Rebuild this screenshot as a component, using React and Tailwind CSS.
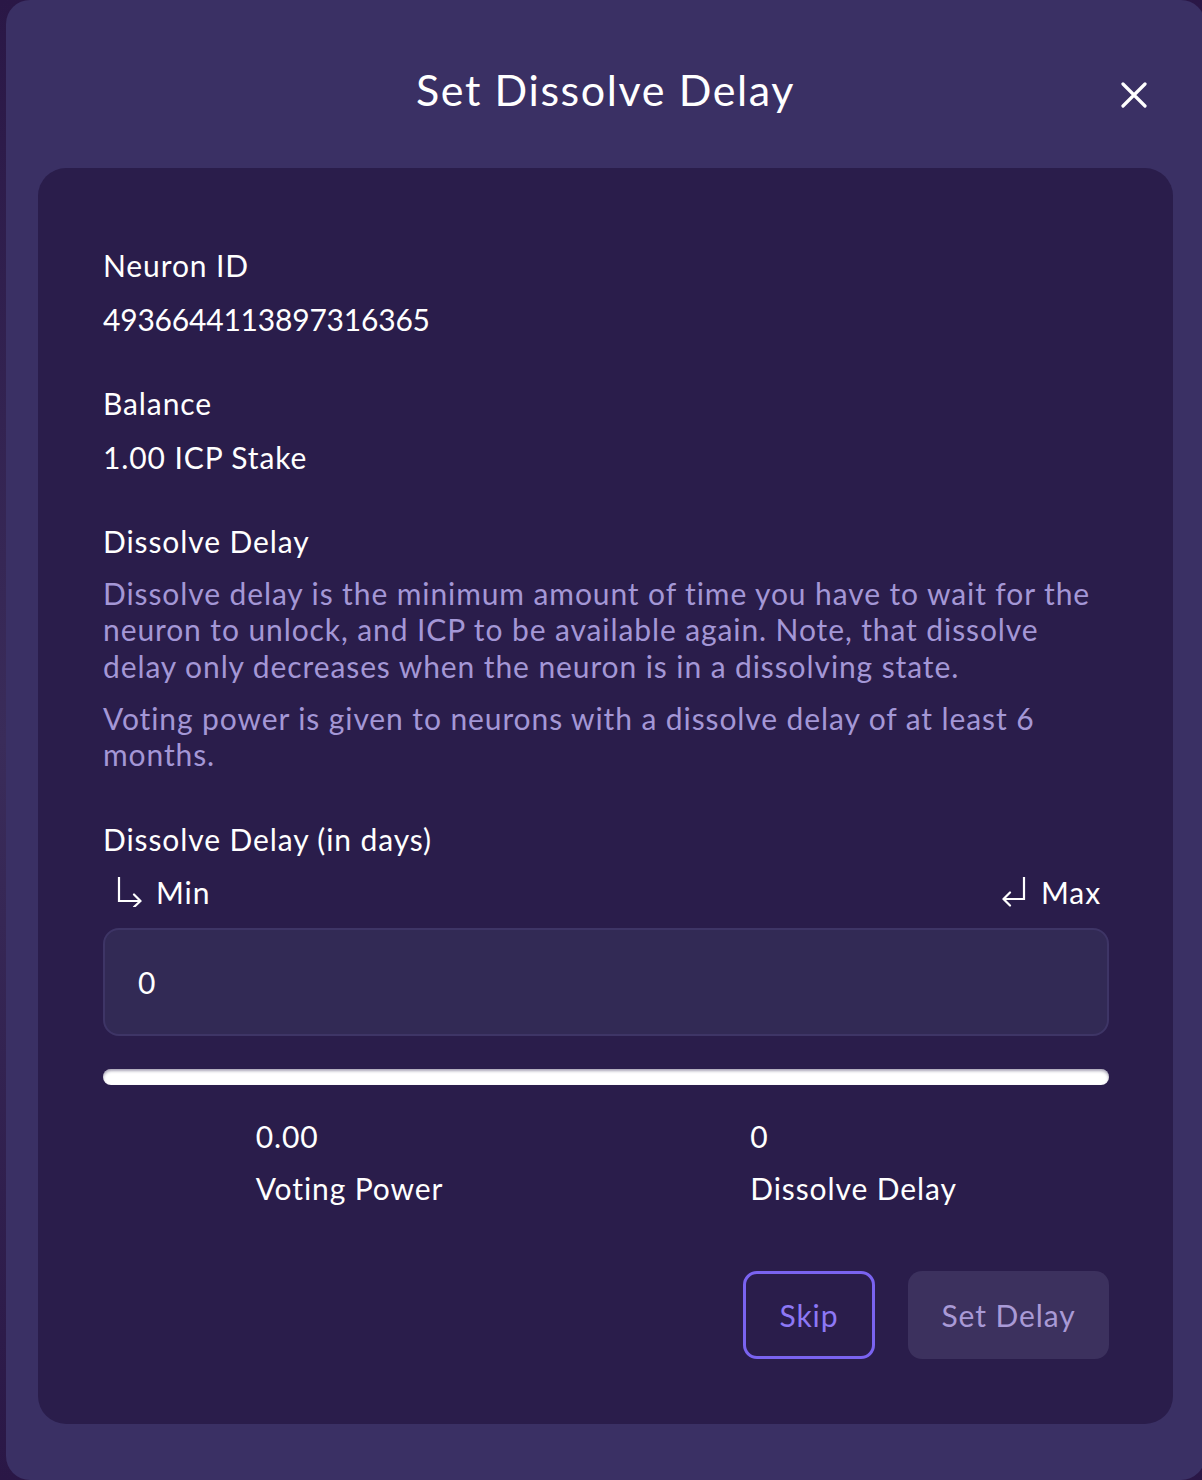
import React from "react";

// Small corner arrows used on the Min / Max shortcuts
function MinArrow() {
  return (
    <svg width="26" height="30" viewBox="0 0 26 30" fill="none" stroke="white" strokeWidth="2.2" strokeLinecap="square">
      <path d="M2 1 V24 H23" />
      <path d="M17 17.5 L23.5 24 L17 30" strokeLinecap="round" strokeLinejoin="round" />
    </svg>
  );
}

function MaxArrow() {
  return (
    <svg width="26" height="30" viewBox="0 0 26 30" fill="none" stroke="white" strokeWidth="2.2" strokeLinecap="square">
      <path d="M23 1 V22 H3" />
      <path d="M9 15.5 L2.5 22 L9 28.5" strokeLinecap="round" strokeLinejoin="round" />
    </svg>
  );
}

function CloseIcon() {
  return (
    <svg width="26" height="26" viewBox="0 0 26 26" fill="none" stroke="white" strokeWidth="3.2" strokeLinecap="round">
      <path d="M2 2 L24 24 M24 2 L2 24" />
    </svg>
  );
}

function Field({ label, value, mono }) {
  return (
    <div>
      <p className="text-[30px] leading-[36px] text-white">{label}</p>
      <p className={`mt-[18px] text-[30px] leading-[36px] text-white ${mono ? "tracking-[-0.2px]" : ""}`}>{value}</p>
    </div>
  );
}

function Stat({ value, label, shift }) {
  return (
    <div className={`flex justify-center ${shift}`}>
      <div>
        <p className="text-[30px] leading-[36px] text-white">{value}</p>
        <p className="mt-4 text-[30px] leading-[36px] text-white">{label}</p>
      </div>
    </div>
  );
}

export default function App() {
  return (
    <div className="min-h-screen w-full overflow-hidden bg-gradient-to-b from-[#2a1746] via-[#3a2c5a] to-[#2a1746] font-['Lato',sans-serif] tracking-[0.9px]">
      <div className="ml-[6px] flex h-[1480px] w-[1199px] flex-col rounded-[24px] bg-[#3a3064]">
        {/* header */}
        <header className="relative h-[168px] pt-[65px] text-center">
          <h1 className="text-[43px] leading-[50px] tracking-[1.6px] text-white">Set Dissolve Delay</h1>
          <button className="absolute right-[58px] top-[82px]">
            <CloseIcon />
          </button>
        </header>

        {/* card */}
        <div className="mx-8 flex flex-col rounded-[28px] bg-[#2a1d4b] pb-[65px] pl-[65px] pr-16 pt-[79px]">
          <div className="flex flex-col gap-12">
            <Field label="Neuron ID" value="4936644113897316365" mono />
            <Field label="Balance" value="1.00 ICP Stake" />

            <div>
              <p className="text-[30px] leading-[36px] text-white">Dissolve Delay</p>
              <p className="mt-4 text-[30px] leading-[36.4px] text-[#a497d6]">
                Dissolve delay is the minimum amount of time you have to wait for the neuron to unlock, and ICP to be
                available again. Note, that dissolve delay only decreases when the neuron is in a dissolving state.
              </p>
              <p className="mt-4 text-[30px] leading-[36px] text-[#a497d6]">
                Voting power is given to neurons with a dissolve delay of at least 6 months.
              </p>
            </div>

            <div className="pt-px">
              <p className="text-[30px] leading-[36px] text-white">Dissolve Delay (in days)</p>
              <div className="mt-[17px] flex items-center justify-between pl-[14px] pr-[8px]">
                <button className="flex items-center gap-[13px] text-[30px] leading-[36px] text-white">
                  <MinArrow />
                  <span>Min</span>
                </button>
                <button className="flex items-center gap-[14px] text-[30px] leading-[36px] text-white">
                  <MaxArrow />
                  <span>Max</span>
                </button>
              </div>
              <div className="mt-[18px] flex h-[108px] items-center rounded-[16px] border-2 border-[#3e3566] bg-[#322a55] pl-[33px]">
                <span className="text-[30px] leading-[36px] text-white">0</span>
              </div>
              <div className="mt-[33px] h-4 rounded-full bg-white shadow-[inset_0_2px_3px_rgba(60,50,90,0.45)]" />
              <div className="mt-[33px] grid grid-cols-2">
                <Stat value="0.00" label="Voting Power" shift="pr-[10px]" />
                <Stat value="0" label="Dissolve Delay" shift="pr-[8px]" />
              </div>
            </div>
          </div>

          <div className="mt-[65px] flex justify-end gap-[33px]">
            <button className="h-[88px] w-[132px] rounded-[14px] border-[3px] border-[#7a63f0] text-[30px] text-[#8d78f5]">
              Skip
            </button>
            <button className="h-[88px] w-[201px] rounded-[14px] bg-[#3c315e] text-[30px] text-[#a99ad6]">
              Set Delay
            </button>
          </div>
        </div>
      </div>
    </div>
  );
}
